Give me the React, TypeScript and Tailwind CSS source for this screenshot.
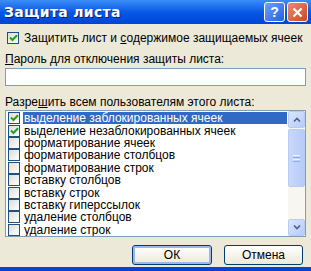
import React from 'react';

const items = [
  { label: 'выделение заблокированных ячеек', checked: true, selected: true },
  { label: 'выделение незаблокированных ячеек', checked: true },
  { label: 'форматирование ячеек' },
  { label: 'форматирование столбцов' },
  { label: 'форматирование строк' },
  { label: 'вставку столбцов' },
  { label: 'вставку строк' },
  { label: 'вставку гиперссылок' },
  { label: 'удаление столбцов' },
  { label: 'удаление строк' },
];

function Tick() {
  return (
    <svg width="9" height="8" viewBox="0 0 9 8" className="block">
      <path d="M1 3.5 L3.5 6 L8 1.2" fill="none" stroke="#21a121" strokeWidth="2" />
    </svg>
  );
}

function CheckBox({ checked }: { checked?: boolean }) {
  return (
    <div className="w-[12px] h-[12px] shrink-0 border border-[#1c5180] bg-gradient-to-br from-[#dcdcd7] to-white flex items-center justify-center">
      {checked && <Tick />}
    </div>
  );
}

function Arrow({ up }: { up?: boolean }) {
  return (
    <svg width="8" height="5" viewBox="0 0 8 5">
      <path d={up ? 'M1 4.5 L4 1.5 L7 4.5' : 'M1 0.5 L4 3.5 L7 0.5'} fill="none" stroke="#4d6185" strokeWidth="1.6" />
    </svg>
  );
}

export default function App() {
  return (
    <div
      className="w-[311px] h-[271px] overflow-hidden bg-[#ece9d8] flex flex-col text-black"
      style={{ fontFamily: '"Liberation Sans", Arial, sans-serif' }}
    >
      {/* Title bar */}
      <div className="h-[24px] shrink-0 bg-gradient-to-b from-[#3c8cf7] via-[#0758e6] to-[#0045d4] flex items-center pl-[4px] pr-[3px]">
        <span
          className="text-white font-bold text-[14px] tracking-[0.3px] [text-shadow:1px_1px_0_#0a1e7a]"
          style={{ fontFamily: '"DejaVu Sans", Verdana, sans-serif' }}
        >
          Защита листа
        </span>
        <div className="ml-auto flex gap-[2px]">
          <div className="w-[21px] h-[20px] rounded-[3px] border border-white bg-gradient-to-br from-[#6ea0f8] to-[#1f5fe6] flex items-center justify-center text-white font-bold text-[14px] leading-none">
            ?
          </div>
          <div className="w-[21px] h-[20px] rounded-[3px] border border-white bg-gradient-to-br from-[#ec8a6c] to-[#d0431e] flex items-center justify-center">
            <svg width="11" height="11" viewBox="0 0 11 11">
              <path d="M1.5 1.5 L9.5 9.5 M9.5 1.5 L1.5 9.5" stroke="white" strokeWidth="2.2" />
            </svg>
          </div>
        </div>
      </div>

      {/* Body */}
      <div className="flex-1 min-h-0 flex flex-col px-[5px] text-[12px] leading-[14px]">
        <div className="flex items-center gap-[5px] mt-[7px] pl-[2px] whitespace-nowrap">
          <CheckBox checked />
          <span>
            Защитить лист и <span className="underline">с</span>одержимое защищаемых ячеек
          </span>
        </div>

        <div className="mt-[7px] whitespace-nowrap">
          <span className="underline">П</span>ароль для отключения защиты листа:
        </div>
        <div className="mt-[2px] h-[18px] shrink-0 border border-[#7f9db9] bg-white" />

        <div className="mt-[9px] whitespace-nowrap">
          Разре<span className="underline">ш</span>ить всем пользователям этого листа:
        </div>
        <div className="mt-[1px] h-[127px] shrink-0 overflow-hidden border border-[#7f9db9] bg-white flex">
          <div className="flex-1 flex flex-col pt-[1px] pl-[2px] pr-[1px]">
            {items.map((it) => (
              <div key={it.label} className="h-[12.4px] shrink-0 flex items-center gap-[3px] whitespace-nowrap">
                <CheckBox checked={it.checked} />
                <span
                  className={
                    it.selected
                      ? 'flex-1 bg-[#316ac5] text-white leading-[12px] pl-[1px]'
                      : 'leading-[12px] pl-[1px]'
                  }
                >
                  {it.label}
                </span>
              </div>
            ))}
          </div>
          {/* Scrollbar */}
          <div className="w-[17px] shrink-0 bg-[#f7f6f1] flex flex-col">
            <div className="h-[17px] rounded-[2px] border border-[#b8cbf3] bg-gradient-to-br from-[#dbe6fd] to-[#b6cbf8] flex items-center justify-center">
              <Arrow up />
            </div>
            <div className="mt-[1px] h-[58px] rounded-[2px] border border-[#b8cbf3] bg-gradient-to-r from-[#c9d8fc] to-[#b6cbf8] flex flex-col items-center justify-center gap-[1px]">
              <div className="w-[7px] h-[1px] bg-[#eef4fe]" />
              <div className="w-[7px] h-[1px] bg-[#8cb0f8]" />
              <div className="w-[7px] h-[1px] bg-[#eef4fe]" />
              <div className="w-[7px] h-[1px] bg-[#8cb0f8]" />
            </div>
            <div className="flex-1" />
            <div className="h-[17px] rounded-[2px] border border-[#b8cbf3] bg-gradient-to-br from-[#dbe6fd] to-[#b6cbf8] flex items-center justify-center">
              <Arrow />
            </div>
          </div>
        </div>

        <div className="mt-[8px] flex justify-end gap-[12px] pr-[3px]">
          <button className="w-[80px] h-[20px] rounded-[3px] border border-[#003c74] bg-gradient-to-b from-white to-[#ece9d8] shadow-[inset_0_0_0_2px_#9bb7ee] text-[12px]">
            ОК
          </button>
          <button className="w-[79px] h-[20px] rounded-[3px] border border-[#003c74] bg-gradient-to-b from-white to-[#ece9d8] text-[12px]">
            Отмена
          </button>
        </div>
      </div>

      <div className="h-[4px] shrink-0 bg-[#0842d0]" />
    </div>
  );
}
